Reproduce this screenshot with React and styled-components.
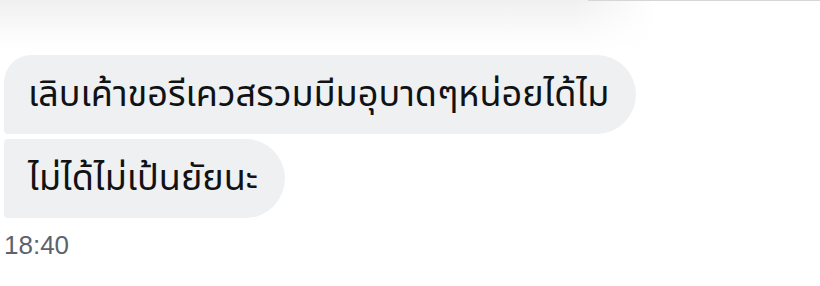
import styled, { createGlobalStyle } from "styled-components";

const GlobalStyle = createGlobalStyle`
  html, body {
    margin: 0;
    padding: 0;
    background: #ffffff;
  }
`;

const messages = [
  { id: 1, text: "เลิบเค้าขอรีเควสรวมมีมอุบาดๆหน่อยได้ไม", first: true },
  { id: 2, text: "ไม่ได้ไม่เป้นยัยนะ", first: false },
];

const App = () => (
  <>
    <GlobalStyle />
    <Page>
      <TopShade>
        <TopLine />
      </TopShade>

      <Thread>
        {messages.map(message => (
          <Bubble key={message.id} first={message.first}>
            {message.text}
          </Bubble>
        ))}
      </Thread>

      <Time>18:40</Time>
    </Page>
  </>
);

const Page = styled.div`
  width: 820px;
  height: 286px;
  overflow: hidden;
  background: #ffffff;
  font-family: "Noto Sans", "Noto Sans Thai", "Liberation Sans", sans-serif;
`;

const TopShade = styled.div`
  position: relative;
  height: 50px;
  background: linear-gradient(
    to right,
    rgba(255, 255, 255, 0) 0%,
    rgba(255, 255, 255, 0) 70%,
    #ffffff 80%
  ),
  linear-gradient(to bottom, #f0f0f0 0%, #fafafa 60%, #ffffff 100%);
`;

const TopLine = styled.div`
  position: absolute;
  top: 0;
  right: 0;
  width: 232px;
  height: 1px;
  background: #d4d6d8;
`;

const Thread = styled.div`
  display: flex;
  flex-direction: column;
  align-items: flex-start;
  gap: 5px;
  padding: 5px 0 0 4px;
`;

const Bubble = styled.div`
  box-sizing: border-box;
  height: 79px;
  display: flex;
  align-items: center;
  padding: 0 27px 0 24px;
  background: #eef0f2;
  color: #111214;
  font-size: 36px;
  border-radius: ${({ first }) =>
    first ? "28px 40px 40px 4px" : "4px 40px 40px 4px"};
`;

const Time = styled.div`
  margin: 12px 0 0 4px;
  font-family: "Liberation Sans", Arial, sans-serif;
  font-size: 26px;
  color: #5c636d;
`;

export default App;
